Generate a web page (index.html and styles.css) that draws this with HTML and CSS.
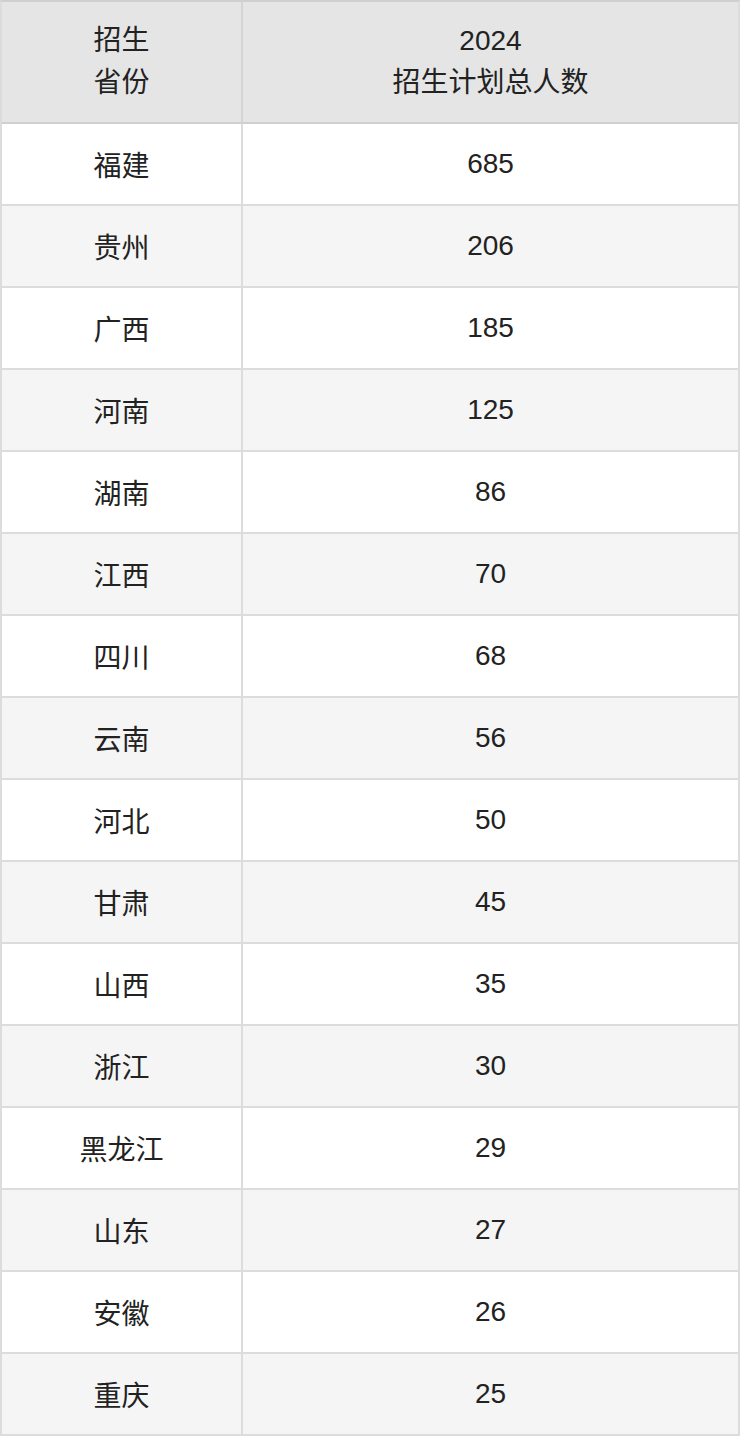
FILE: index.html
```html
<!DOCTYPE html>
<html lang="zh-CN">
<head>
<meta charset="utf-8">
<title>招生计划</title>
<link rel="stylesheet" href="styles.css">
</head>
<body>
<div class="plan">
  <div class="cell head">招生<br>省份</div>
  <div class="cell head">2024<br>招生计划总人数</div>

  <div class="cell">福建</div><div class="cell">685</div>
  <div class="cell alt">贵州</div><div class="cell alt">206</div>
  <div class="cell">广西</div><div class="cell">185</div>
  <div class="cell alt">河南</div><div class="cell alt">125</div>
  <div class="cell">湖南</div><div class="cell">86</div>
  <div class="cell alt">江西</div><div class="cell alt">70</div>
  <div class="cell">四川</div><div class="cell">68</div>
  <div class="cell alt">云南</div><div class="cell alt">56</div>
  <div class="cell">河北</div><div class="cell">50</div>
  <div class="cell alt">甘肃</div><div class="cell alt">45</div>
  <div class="cell">山西</div><div class="cell">35</div>
  <div class="cell alt">浙江</div><div class="cell alt">30</div>
  <div class="cell">黑龙江</div><div class="cell">29</div>
  <div class="cell alt">山东</div><div class="cell alt">27</div>
  <div class="cell">安徽</div><div class="cell">26</div>
  <div class="cell alt last">重庆</div><div class="cell alt last">25</div>
</div>
</body>
</html>
```

FILE: styles.css
```css
html, body {
  margin: 0;
  padding: 0;
  background: #ffffff;
}

.plan {
  box-sizing: border-box;
  width: 740px;
  display: grid;
  grid-template-columns: 241px 495px;
  border: 2px solid #dcdcdc;
  border-top-color: #cfcfcf;
  font-family: "Liberation Sans", "Noto Sans CJK SC", sans-serif;
  font-size: 28px;
  color: #222222;
}

.cell {
  box-sizing: border-box;
  height: 82px;
  display: flex;
  align-items: center;
  justify-content: center;
  text-align: center;
  background: #ffffff;
  border-bottom: 2px solid #dcdcdc;
}

.cell:nth-child(odd) {
  border-right: 2px solid #dcdcdc;
}

.cell.alt {
  background: #f5f5f5;
}

.cell.head {
  height: 122px;
  background: #e5e5e5;
  line-height: 42px;
  border-bottom-color: #cfcfcf;
}

.cell.head:nth-child(odd) {
  border-right-color: #d4d4d4;
}

.cell.last {
  height: 80px;
  border-bottom: none;
}
```
